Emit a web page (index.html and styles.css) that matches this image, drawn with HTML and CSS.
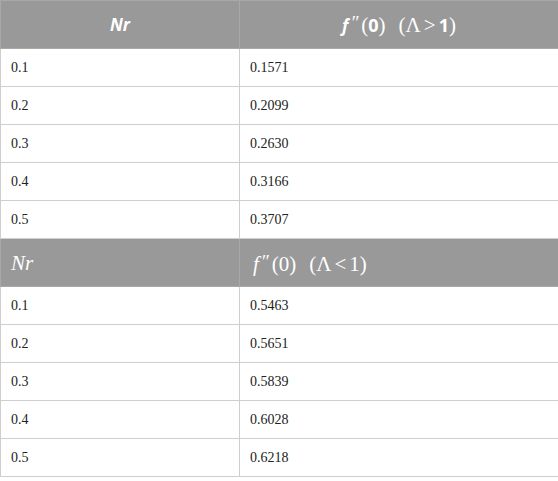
FILE: index.html
```html
<!DOCTYPE html>
<html>
<head>
<meta charset="utf-8">
<link rel="stylesheet" href="styles.css">
</head>
<body>
<table class="tbl">
  <colgroup><col class="c1"><col class="c2"></colgroup>
  <thead>
    <tr class="head head-a">
      <th><span class="bi">Nr</span></th>
      <th><span class="bi">f</span><span class="prime">″</span><span class="sr">(</span><span class="b">0</span><span class="sr">)</span><span class="sr gap">(Λ</span><span class="sr rel">&gt;</span><span class="b">1</span><span class="sr">)</span></th>
    </tr>
  </thead>
  <tbody>
    <tr><td>0.1</td><td>0.1571</td></tr>
    <tr><td>0.2</td><td>0.2099</td></tr>
    <tr><td>0.3</td><td>0.2630</td></tr>
    <tr><td>0.4</td><td>0.3166</td></tr>
    <tr><td>0.5</td><td>0.3707</td></tr>
    <tr class="head head-b">
      <td><span class="mi">Nr</span></td>
      <td><span class="mi lead">f</span><span class="mprime">″</span>(0)<span class="gap">(Λ</span><span class="rel">&lt;</span>1)</td>
    </tr>
    <tr><td>0.1</td><td>0.5463</td></tr>
    <tr><td>0.2</td><td>0.5651</td></tr>
    <tr><td>0.3</td><td>0.5839</td></tr>
    <tr><td>0.4</td><td>0.6028</td></tr>
    <tr><td>0.5</td><td>0.6218</td></tr>
  </tbody>
</table>
</body>
</html>
```

FILE: styles.css
```css
html, body {
  margin: 0;
  padding: 0;
  background: #ffffff;
}

.tbl {
  width: 558px;
  border-collapse: collapse;
  table-layout: fixed;
  font-size: 14px;
  color: #222222;
}

.c1 { width: 239px; }
.c2 { width: 319px; }

.tbl td {
  font-family: "Liberation Serif", "DejaVu Serif", serif;
}

.tbl td,
.tbl th {
  border: 1px solid #cfcfcf;
  padding: 0 10px;
  height: 37px;
  text-align: left;
  vertical-align: middle;
}

.tbl tr.head th,
.tbl tr.head td {
  background: #999999;
  color: #ffffff;
  height: 47px;
  line-height: 24px;
  border-color: #a8a8a8;
}

.head-a th {
  text-align: center;
  font-family: "Open Sans", "Liberation Sans", sans-serif;
  font-size: 17px;
  font-weight: 700;
}

.bi {
  font-style: italic;
  font-weight: 700;
}

.b {
  font-weight: 700;
  font-size: 18px;
}

.sr {
  font-family: "Liberation Serif", "DejaVu Serif", serif;
  font-weight: 400;
  font-size: 21px;
}

.prime {
  font-family: "Liberation Serif", "DejaVu Serif", serif;
  font-weight: 400;
  font-style: italic;
  font-size: 19px;
  vertical-align: 3px;
  margin: 0 3px 0 2px;
}

.gap {
  margin-left: 13px;
}

.rel {
  margin: 0 3px;
}

.head-b td {
  font-family: "Liberation Serif", "DejaVu Serif", serif;
  font-size: 21px;
  font-weight: 400;
}

.mi {
  font-style: italic;
}

.lead {
  margin-left: 3px;
}

.mprime {
  font-style: italic;
  font-size: 19px;
  vertical-align: 3px;
  margin: 0 3px 0 2px;
}
```
